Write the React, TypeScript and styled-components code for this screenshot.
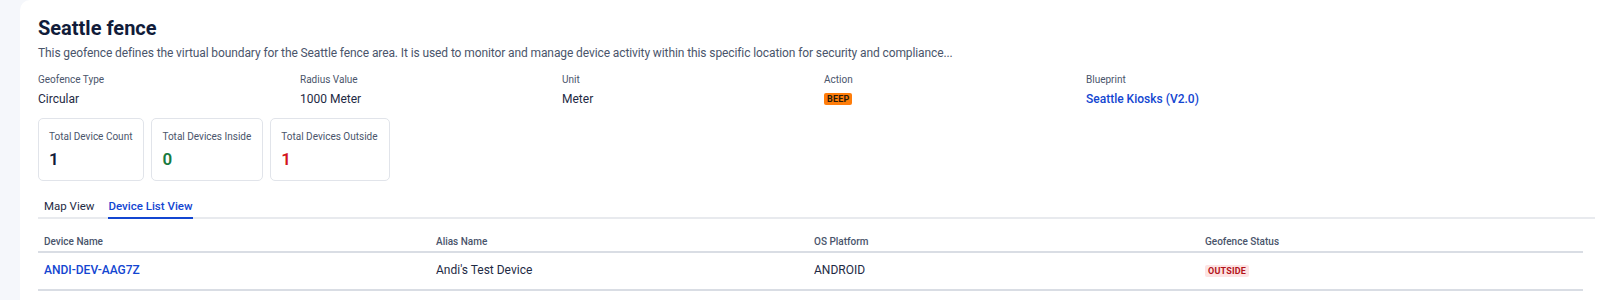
import React, { useState } from 'react';
import styled, { createGlobalStyle } from 'styled-components';

const colors = {
  pageBg: '#f5f7fb',
  card: '#ffffff',
  navy: '#111c3a',
  text: '#1e2a44',
  muted: '#4a556b',
  link: '#1346d1',
  green: '#177a3f',
  red: '#d3141c',
  border: '#e1e4ea',
  line: '#d9dde4'
};

const GlobalStyle = createGlobalStyle`
  body {
    margin: 0;
    background: ${colors.pageBg};
    font-family: Roboto, 'Noto Sans', sans-serif;
    -webkit-font-smoothing: antialiased;
  }
`;

const details = [
  { label: 'Geofence Type', value: 'Circular' },
  { label: 'Radius Value', value: '1000 Meter' },
  { label: 'Unit', value: 'Meter' },
  { label: 'Action', value: 'BEEP', kind: 'badge' },
  { label: 'Blueprint', value: 'Seattle Kiosks (V2.0)', kind: 'link' }
];

const stats = [
  { label: 'Total Device Count', value: 1, tone: 'default' },
  { label: 'Total Devices Inside', value: 0, tone: 'green' },
  { label: 'Total Devices Outside', value: 1, tone: 'red' }
];

const devices = [
  { name: 'ANDI-DEV-AAG7Z', alias: "Andi's Test Device", os: 'ANDROID', status: 'OUTSIDE' }
];

const App = () => {
  const [tab, setTab] = useState<string>('list');

  return (
    <Page>
      <GlobalStyle />
      <Card>
        <Title>Seattle fence</Title>
        <Description>
          This geofence defines the virtual boundary for the Seattle fence area. It is used to monitor and
          manage device activity within this specific location for security and compliance...
        </Description>

        <DetailGrid>
          {details.map((d) => (
            <DetailItem key={d.label}>
              <DetailLabel>{d.label}</DetailLabel>
              {d.kind === 'badge' ? (
                <ActionBadge>{d.value}</ActionBadge>
              ) : d.kind === 'link' ? (
                <LinkValue href="#">{d.value}</LinkValue>
              ) : (
                <DetailValue>{d.value}</DetailValue>
              )}
            </DetailItem>
          ))}
        </DetailGrid>

        <StatRow>
          {stats.map((s) => (
            <StatCard key={s.label}>
              <StatLabel>{s.label}</StatLabel>
              <StatValue tone={s.tone}>{s.value}</StatValue>
            </StatCard>
          ))}
        </StatRow>

        <Tabs>
          <Tab active={tab === 'map'} onClick={() => setTab('map')}>
            Map View
          </Tab>
          <Tab active={tab === 'list'} onClick={() => setTab('list')}>
            Device List View
          </Tab>
        </Tabs>

        <Table>
          <HeaderRow>
            <HeaderCell>Device Name</HeaderCell>
            <HeaderCell>Alias Name</HeaderCell>
            <HeaderCell>OS Platform</HeaderCell>
            <HeaderCell>Geofence Status</HeaderCell>
          </HeaderRow>
          {devices.map((d) => (
            <BodyRow key={d.name}>
              <Cell>
                <RowLink href="#">{d.name}</RowLink>
              </Cell>
              <Cell>{d.alias}</Cell>
              <Cell>{d.os}</Cell>
              <Cell>
                <StatusBadge>{d.status}</StatusBadge>
              </Cell>
            </BodyRow>
          ))}
        </Table>
      </Card>
    </Page>
  );
};

export default App;

interface toneProps {
  tone?: string;
}

interface tabProps {
  active?: boolean;
}

const Page = styled.div`
  width: 1600px;
  height: 300px;
  padding-left: 20px;
  box-sizing: border-box;
  overflow: hidden;
`;

const Card = styled.div`
  background: ${colors.card};
  border-top-left-radius: 10px;
  height: 100%;
  padding: 15px 5px 0 18px;
  box-sizing: border-box;
`;

const Title = styled.h1`
  margin: 0;
  font-size: 20px;
  line-height: 26px;
  font-weight: 700;
  color: ${colors.navy};
`;

const Description = styled.p`
  margin: 4px 0 0;
  font-size: 12px;
  line-height: 16px;
  letter-spacing: -0.1px;
  color: ${colors.muted};
`;

const DetailGrid = styled.div`
  display: grid;
  grid-template-columns: repeat(5, 262px);
  margin-top: 12px;
`;

const DetailItem = styled.div`
  display: flex;
  flex-direction: column;
  align-items: flex-start;
  gap: 6px;
`;

const DetailLabel = styled.span`
  font-size: 10px;
  line-height: 13px;
  color: ${colors.muted};
`;

const DetailValue = styled.span`
  font-size: 12px;
  line-height: 15px;
  color: ${colors.text};
`;

const LinkValue = styled.a`
  font-size: 12px;
  line-height: 15px;
  font-weight: 500;
  color: ${colors.link};
  text-decoration: none;
`;

const ActionBadge = styled.span`
  margin-top: 1px;
  font-size: 9px;
  line-height: 12px;
  font-weight: 700;
  letter-spacing: 0.2px;
  padding: 0 3px;
  border-radius: 2px;
  background: #ff7d0a;
  color: #2a1a08;
`;

const StatRow = styled.div`
  display: flex;
  gap: 7px;
  margin-top: 11px;
`;

const StatCard = styled.div`
  border: 1px solid ${colors.border};
  border-radius: 5px;
  padding: 11px 11px 0 10px;
  height: 63px;
  box-sizing: border-box;
  display: flex;
  flex-direction: column;
  gap: 5px;
`;

const StatLabel = styled.span`
  font-size: 10px;
  line-height: 13px;
  color: ${colors.muted};
  white-space: nowrap;
`;

const StatValue = styled.span<toneProps>`
  font-size: 17px;
  line-height: 22px;
  font-weight: 600;
  color: ${(p) => (p.tone === 'green' ? colors.green : p.tone === 'red' ? colors.red : colors.navy)};
`;

const Tabs = styled.div`
  display: flex;
  gap: 14px;
  padding-left: 6px;
  margin-top: 18px;
  border-bottom: 2px solid #e8eaee;
`;

const Tab = styled.button<tabProps>`
  background: none;
  border: none;
  padding: 0 0 4px;
  margin-bottom: -2px;
  font-family: inherit;
  font-size: 11.5px;
  line-height: 14px;
  font-weight: ${(p) => (p.active ? 500 : 400)};
  cursor: pointer;
  color: ${(p) => (p.active ? colors.link : colors.text)};
  border-bottom: 2px solid ${(p) => (p.active ? colors.link : 'transparent')};
`;

const Table = styled.div`
  margin-top: 16px;
  margin-right: 12px;
`;

const Row = styled.div`
  display: grid;
  grid-template-columns: 392px 378px 391px 1fr;
  border-bottom: 2px solid ${colors.line};
`;

const HeaderRow = styled(Row)`
  padding-bottom: 3px;
`;

const BodyRow = styled(Row)`
  padding: 10px 0 11px;
  align-items: center;
`;

const HeaderCell = styled.div`
  padding-left: 6px;
  font-size: 10px;
  line-height: 13px;
  font-weight: 500;
  color: ${colors.muted};
`;

const Cell = styled.div`
  padding-left: 6px;
  font-size: 12px;
  line-height: 15px;
  color: ${colors.text};
`;

const RowLink = styled.a`
  font-weight: 500;
  color: ${colors.link};
  text-decoration: none;
`;

const StatusBadge = styled.span`
  font-size: 9px;
  line-height: 12px;
  font-weight: 700;
  letter-spacing: 0.2px;
  padding: 1px 3px;
  border-radius: 2px;
  background: #fde3e3;
  color: #b3121a;
`;
